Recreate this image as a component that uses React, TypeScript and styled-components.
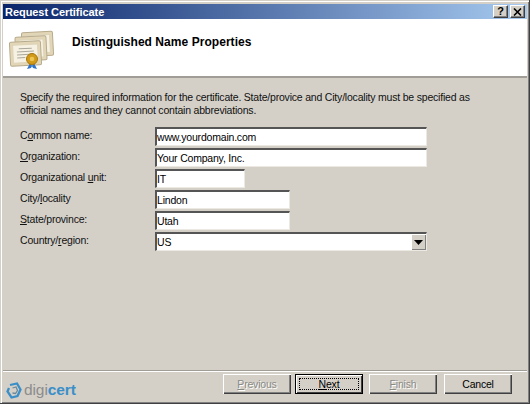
import React from 'react'
import styled, { createGlobalStyle } from 'styled-components'

const Global = createGlobalStyle`
  html, body { margin: 0; padding: 0; background: #d4d0c8; }
  body { font-family: "Liberation Sans", Arial, sans-serif; font-size: 10.5px; letter-spacing: -0.2px; color: #000; }
  u { text-underline-offset: 1px; }
`

const Window = styled.div`
  width: 530px;
  height: 404px;
  box-sizing: border-box;
  display: flex;
  flex-direction: column;
  background: #d4d0c8;
  padding: 4px 2px 1px 3px;
  border-right: 1px solid #404040;
  border-bottom: 1px solid #404040;
  box-shadow: inset 1px 1px 0 #d4d0c8, inset 2px 2px 0 #fff, inset -1px -1px 0 #808080;
`

const TitleBar = styled.div`
  height: 15px;
  flex: none;
  display: flex;
  align-items: center;
  justify-content: space-between;
  padding: 0 2px 0 2px;
  background: linear-gradient(90deg, #0a246a, #a6caf0);
`

const TitleText = styled.span`
  color: #fff;
  font-weight: bold;
  font-size: 11px;
  letter-spacing: -0.05px;
`

const CaptionButtons = styled.div`
  display: flex;
  gap: 2px;
`

const CaptionButton = styled.div`
  width: 15px;
  height: 13px;
  box-sizing: border-box;
  display: flex;
  align-items: center;
  justify-content: center;
  background: #d4d0c8;
  border-top: 1px solid #fff;
  border-left: 1px solid #fff;
  border-right: 1px solid #404040;
  border-bottom: 1px solid #404040;
  box-shadow: inset -1px -1px 0 #808080;
  font-weight: bold;
  font-size: 11px;
  line-height: 1;
`

const Header = styled.div`
  height: 59px;
  box-sizing: border-box;
  flex: none;
  display: flex;
  align-items: center;
  background: #fff;
  border-bottom: 2px solid #a09d96;
  padding: 3px 0 0 6px;
`

const HeaderTitle = styled.h1`
  margin: 0 0 14px 17px;
  font-size: 12px;
  font-weight: bold;
  letter-spacing: 0.05px;
  color: #000;
`

const Body = styled.div`
  flex: 1;
  display: flex;
  flex-direction: column;
  padding: 13px 0 0 17px;
`

const Intro = styled.p`
  margin: 0;
  width: 470px;
  line-height: 13px;
  color: #111;
`

const Form = styled.div`
  margin-top: 10px;
  display: grid;
  grid-template-columns: 135px auto;
  grid-auto-rows: 19px;
  row-gap: 2px;
  justify-content: start;
  align-items: center;
`

const Label = styled.label`
  color: #111;
  margin-top: -3px;
`

const Field = styled.div<{ $width: number }>`
  width: ${(p) => p.$width}px;
  height: 19px;
  box-sizing: border-box;
  display: flex;
  align-items: center;
  justify-content: space-between;
  padding-left: 0;
  background: #fff;
  border-top: 2px solid #555;
  border-left: 2px solid #555;
  border-right: 1px solid #ece9e2;
  border-bottom: 1px solid #ece9e2;
`

const DropButton = styled.div`
  width: 15px;
  height: 16px;
  display: flex;
  align-items: center;
  justify-content: center;
  background: #d4d0c8;
  box-sizing: border-box;
  box-shadow: inset 1px 1px 0 #fff, inset -1px -1px 0 #808080;
`

const Footer = styled.div`
  flex: none;
  height: 32px;
  box-sizing: border-box;
  border-top: 1px solid #a09d96;
  box-shadow: inset 0 1px 0 #fff;
  display: flex;
  align-items: flex-start;
  justify-content: space-between;
  padding: 3px 15px 0 3px;
`

const Logo = styled.div`
  display: flex;
  align-items: center;
  gap: 2px;
  margin-top: 6px;
  font-size: 15.5px;
  line-height: 20px;
  letter-spacing: -0.1px;
  color: #8c8c8c;
`

const LogoAccent = styled.b`
  color: #3a8fc8;
`

const Buttons = styled.div`
  display: flex;
  gap: 4px;
`

const Button = styled.div<{ $disabled?: boolean; $primary?: boolean; $gap?: number }>`
  width: 68px;
  height: 20px;
  box-sizing: border-box;
  margin-left: ${(p) => p.$gap ?? 0}px;
  display: flex;
  align-items: center;
  justify-content: center;
  position: relative;
  background: #d4d0c8;
  color: ${(p) => (p.$disabled ? '#8a8a85' : '#000')};
  text-shadow: ${(p) => (p.$disabled ? '1px 1px 0 #fff' : 'none')};
  border: ${(p) => (p.$primary ? '1px solid #000' : '0')};
  box-shadow: ${(p) =>
    p.$primary
      ? 'inset 1px 1px 0 #fff, inset -1px -1px 0 #404040'
      : 'inset 1px 1px 0 #fff, inset -1px -1px 0 #404040, inset -2px -2px 0 #808080'};
`

const FocusRing = styled.span`
  position: absolute;
  inset: 3px;
  border: 1px dotted #000;
`

const CertIcon = () => (
  <svg width="46" height="44" viewBox="0 0 46 44">
    {[
      [13, 5],
      [6.5, 9.5],
      [1, 14.5],
    ].map(([x, y], i) => (
      <g key={i} transform={`translate(${x} ${y}) rotate(-3 16 12)`}>
        <rect x="0" y="0" width="31" height="24" rx="1.5" fill="#e2d6b6" stroke="#b7ab8d" />
        <rect x="3" y="3" width="25" height="18" fill="#f6f1e2" stroke="#ddd3b8" />
        <path d="M9 7h13M7 10h17M7 13h17M7 16h8" stroke="#aaa79c" strokeWidth="1" />
      </g>
    ))}
    <path d="M21 36l-3 6 4-1 2-4zM25 36l3 6-4-1-2-4z" fill="#2f73c8" />
    <circle cx="23" cy="32" r="5.5" fill="#d19a18" stroke="#a8760c" />
    <circle cx="23" cy="32" r="2.3" fill="#eec452" />
  </svg>
)

const LogoMark = () => (
  <svg width="16" height="17" viewBox="0 0 16 17" fill="none">
    <path d="M4 3L11 1.5L14.5 7.5L11.5 14L5.5 15.5L1.5 9.5L3 6" stroke="#3a8fc8" strokeWidth="2.3" />
    <path d="M6.5 6L10 5L11.5 8.5L9.5 11.5L6.5 11" stroke="#6a8a9e" strokeWidth="1.3" />
  </svg>
)

const App = () => (
  <Window>
    <Global />
    <TitleBar>
      <TitleText>Request Certificate</TitleText>
      <CaptionButtons>
        <CaptionButton>?</CaptionButton>
        <CaptionButton>
          <svg width="9" height="8" viewBox="0 0 9 8">
            <path d="M1 0.5L8 7.5M8 0.5L1 7.5" stroke="#000" strokeWidth="1.6" />
          </svg>
        </CaptionButton>
      </CaptionButtons>
    </TitleBar>
    <Header>
      <CertIcon />
      <HeaderTitle>Distinguished Name Properties</HeaderTitle>
    </Header>
    <Body>
      <Intro>
        Specify the required information for the certificate. State/provice and City/locality must be specified as
        official names and they cannot contain abbreviations.
      </Intro>
      <Form>
        <Label>C<u>o</u>mmon name:</Label>
        <Field $width={272}>www.yourdomain.com</Field>
        <Label><u>O</u>rganization:</Label>
        <Field $width={272}>Your Company, Inc.</Field>
        <Label>Organizational <u>u</u>nit:</Label>
        <Field $width={90}>IT</Field>
        <Label>City/<u>l</u>ocality</Label>
        <Field $width={135}>Lindon</Field>
        <Label><u>S</u>tate/province:</Label>
        <Field $width={135}>Utah</Field>
        <Label>Country/<u>r</u>egion:</Label>
        <Field $width={272}>
          US
          <DropButton>
            <svg width="9" height="5" viewBox="0 0 9 5">
              <path d="M0 0H9L4.5 5Z" fill="#000" />
            </svg>
          </DropButton>
        </Field>
      </Form>
    </Body>
    <Footer>
      <Logo>
        <LogoMark />
        <span>
          digi<LogoAccent>cert</LogoAccent>
        </span>
      </Logo>
      <Buttons>
        <Button $disabled><u>P</u>revious</Button>
        <Button $primary>
          <FocusRing />
          <u>N</u>ext
        </Button>
        <Button $disabled $gap={2}><u>F</u>inish</Button>
        <Button $gap={3}>Cancel</Button>
      </Buttons>
    </Footer>
  </Window>
)

export default App
